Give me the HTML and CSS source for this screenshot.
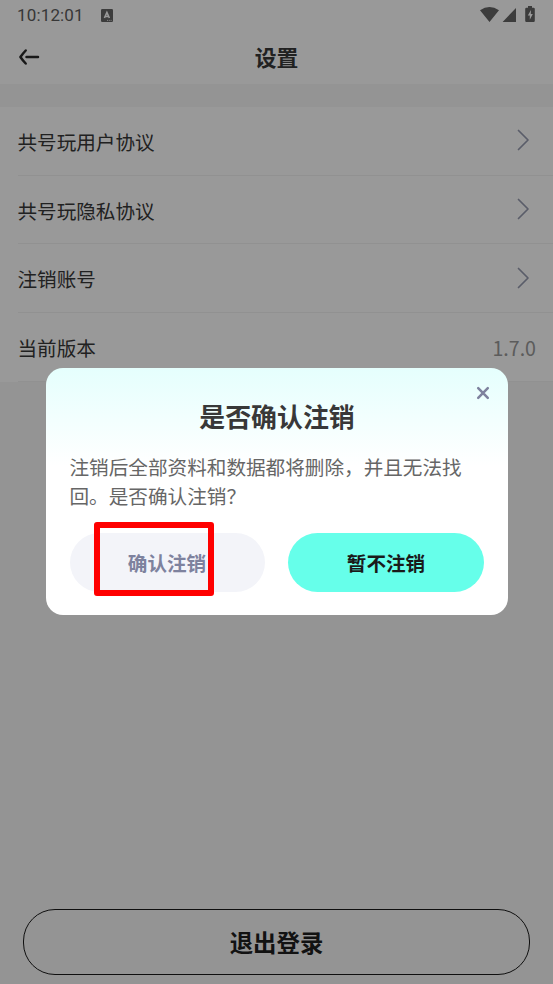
FILE: index.html
```html
<!DOCTYPE html>
<html lang="zh-CN">
<head>
<meta charset="utf-8">
<title>设置</title>
<link rel="stylesheet" href="styles.css">
</head>
<body>
<div class="screen">
  <header class="top">
    <div class="status">
      <span class="clock">10:12:01</span>
      <svg class="ime" width="12" height="13" viewBox="0 0 12 13"><rect width="12" height="13" rx="1.3" fill="#646464"/><path d="M3.4 9 5.9 3.4 8.4 9M4.2 7.5h3.4" fill="none" stroke="#fff" stroke-width="1.6"/><path d="M6 11.4h5" stroke="#ddd" stroke-width="1" stroke-dasharray="1 .8"/></svg>
      <svg class="signals" width="56" height="17" viewBox="0 0 56 17" fill="#646464"><path d="M0 4.2Q9.5-2.2 19 4.2L9.5 16ZM36 2V16H22.6ZM48 1.8V0h4v1.8h1.6q1.2 0 1.2 1.2v11.8q0 1.2-1.2 1.2h-7.2q-1.2 0-1.2-1.2V3q0-1.2 1.2-1.2Z"/><path d="M51 4 47.8 9.5H49.8V13.8L52.8 8H50.8Z" fill="#fff"/></svg>
    </div>
    <div class="nav">
      <svg class="back" width="22" height="18" viewBox="0 0 22 18" fill="none" stroke="#292929" stroke-width="2.5" stroke-linecap="round" stroke-linejoin="round"><path d="M7.7 2.5Q4.9 5.5 2.4 9Q4.9 12.6 7.7 15.5M8.5 9H20"/></svg>
      <h1>设置</h1>
    </div>
  </header>
  <main class="list">
    <div class="row"><span>共号玩用户协议</span><svg class="chevron" viewBox="0 0 14 22"><path d="M2.5 1.5 12 11 2.5 20.5"/></svg></div>
    <div class="row"><span>共号玩隐私协议</span><svg class="chevron" viewBox="0 0 14 22"><path d="M2.5 1.5 12 11 2.5 20.5"/></svg></div>
    <div class="row"><span>注销账号</span><svg class="chevron" viewBox="0 0 14 22"><path d="M2.5 1.5 12 11 2.5 20.5"/></svg></div>
    <div class="row"><span>当前版本</span><span class="version">1.7.0</span></div>
  </main>
  <button class="logout">退出登录</button>
</div>
<div class="overlay">
  <section class="dialog">
    <svg class="close" width="14" height="14" viewBox="0 0 14 14"><path d="M2.2 2.2 11.8 11.8M11.8 2.2 2.2 11.8" fill="none" stroke="#7e829e" stroke-width="2.5" stroke-linecap="round"/></svg>
    <h2>是否确认注销</h2>
    <p>注销后全部资料和数据都将删除，并且无法找回。是否确认注销？</p>
    <div class="actions">
      <button class="confirm">确认注销</button>
      <button class="cancel">暂不注销</button>
    </div>
    <div class="highlight"></div>
  </section>
</div>
</body>
</html>
```
FILE: styles.css
```css
* { box-sizing: border-box; }
body {
  margin: 0;
  font-family: "Noto Sans CJK SC", sans-serif;
  color: #383838;
}
h1, h2, p { margin: 0; }
button { font-family: inherit; padding: 0; border: 0; }
.screen {
  height: 984px;
  display: flex;
  flex-direction: column;
  background: #f7f7f7;
}
.top { height: 84px; background: #fff; }
.status {
  display: flex;
  align-items: center;
  height: 31px;
  padding: 0 17px 0 18px;
}
.clock {
  width: 83px;
  font: 400 17px/31px Roboto, sans-serif;
  letter-spacing: .15px;
  color: #5c5c5c;
  margin-left: -1px;
  margin-right: 1px;
}
.ime { margin-top: -1px; }
.signals { margin-left: auto; margin-top: -2px; }
.nav {
  display: grid;
  grid-template-columns: 40px 1fr 40px;
  align-items: center;
  height: 53px;
  padding: 0 18px;
}
.nav h1 {
  margin-top: -2px;
  text-align: center;
  font-size: 21.8px;
  line-height: 32px;
  font-weight: 700;
}
.back { margin-top: -1px; }
.list { margin-top: 23px; background: #fff; }
.row {
  display: flex;
  align-items: center;
  justify-content: space-between;
  height: 68.7px;
  margin-left: 17.5px;
  padding: 1px 17px 0 0;
  border-bottom: 1px solid #f2f2f2;
  font-size: 19.6px;
}
.chevron {
  width: 14px;
  height: 22px;
  margin-right: 6px;
  margin-top: -2px;
  fill: none;
  stroke: #979bb0;
  stroke-width: 1.7;
  stroke-linecap: round;
  stroke-linejoin: round;
}
.version { color: #999; }
.logout {
  height: 66px;
  margin: auto 23px 9px;
  border: 1px solid #1a1a1a;
  border-radius: 32px;
  background: transparent;
  color: #1f1f1f;
  font-size: 23.4px;
  font-weight: 700;
}
.overlay {
  position: absolute;
  inset: 0;
  display: flex;
  align-items: center;
  justify-content: center;
  padding-bottom: 1px;
  background: rgba(0, 0, 0, .4);
}
.dialog {
  position: relative;
  width: 462px;
  height: 247px;
  padding: 29px 24px 24px;
  border-radius: 17px;
  background: linear-gradient(#e5fffd, #fff 98px);
}
.dialog h2 {
  padding-left: 1px;
  text-align: center;
  font-size: 25.9px;
  line-height: 38px;
  font-weight: 700;
}
.dialog p {
  margin-top: 17px;
  font-size: 19.62px;
  line-height: 29px;
  color: #666;
}
.close { position: absolute; top: 18px; right: 18px; }
.actions { display: flex; gap: 23px; margin-top: 23px; }
.actions button {
  flex: 1;
  height: 59px;
  border-radius: 30px;
  font-size: 19.6px;
  font-weight: 700;
}
.actions .confirm { background: #f3f4f9; color: #7e829e; }
.actions .cancel { padding-left: 1px; background: #66ffea; color: #1a1a1a; }
.highlight {
  position: absolute;
  left: 48px;
  top: 154px;
  width: 120px;
  height: 74px;
  border: 6px solid #f00;
  border-radius: 3px;
}
```
